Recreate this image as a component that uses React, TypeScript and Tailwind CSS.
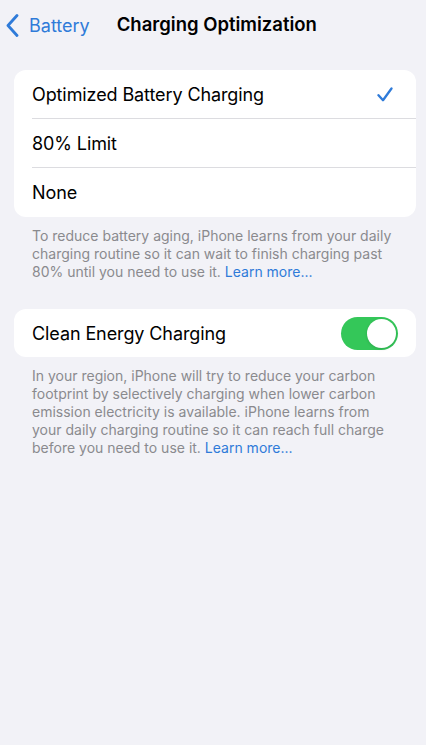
const font = { fontFamily: 'Inter, "Noto Sans", sans-serif' }

function Toggle({ on }: { on: boolean }) {
  return (
    <div
      className={`flex h-[33px] w-[57px] items-center rounded-full p-[2px] ${
        on ? 'justify-end bg-[#34c759]' : 'justify-start bg-[#e9e9ea]'
      }`}
    >
      <div className="h-[29px] w-[29px] rounded-full bg-white shadow-[0_1px_3px_rgba(0,0,0,0.15)]" />
    </div>
  )
}

function LearnMore() {
  return <span className="text-[#2f7bd9]">Learn more...</span>
}

export default function App() {
  const options = ['Optimized Battery Charging', '80% Limit', 'None']
  const selected = 0

  return (
    <div
      className="min-h-[745px] w-full bg-[#f2f2f7] text-black antialiased"
      style={font}
    >
      <header className="flex h-[50px] items-center">
        <div className="flex items-center pl-[6px] text-[#2f7bd9]">
          <svg width="13" height="23" viewBox="0 0 13 23" fill="none">
            <path
              d="M11 1.5L2 11.5L11 21.5"
              stroke="currentColor"
              strokeWidth="2.8"
              strokeLinecap="round"
              strokeLinejoin="round"
            />
          </svg>
          <span className="ml-[10px] text-[18px]">Battery</span>
        </div>
        <h1 className="ml-[27px] text-[18.5px] font-semibold">
          Charging Optimization
        </h1>
      </header>

      <div className="pl-[14px] pr-[10px] pt-[20px]">
        <div className="overflow-hidden rounded-[12px] bg-white">
          {options.map((label, i) => (
            <div key={label} className="pl-[18px]">
              <div
                className={`flex h-[49px] items-center justify-between pr-[23px] ${
                  i < options.length - 1 ? 'border-b border-[#dcdce0]' : ''
                }`}
              >
                <span className="text-[18px] tracking-[-0.1px]">{label}</span>
                {i === selected ? (
                  <svg width="16" height="15" viewBox="0 0 16 15" fill="none" className="text-[#2f7bd9]">
                    <path
                      d="M1.5 8.2L6 13.2L14.5 1.5"
                      stroke="currentColor"
                      strokeWidth="2.3"
                      strokeLinecap="round"
                      strokeLinejoin="round"
                    />
                  </svg>
                ) : null}
              </div>
            </div>
          ))}
        </div>
        <p className="pl-[18px] pt-[10px] text-[14px] leading-[18px] text-[#8a8a8e] whitespace-nowrap">
          To reduce battery aging, iPhone learns from your daily
          <br />
          charging routine so it can wait to finish charging past
          <br />
          80% until you need to use it. <LearnMore />
        </p>

        <div className="mt-[28px] flex h-[48px] items-center justify-between rounded-[12px] bg-white pl-[18px] pr-[18px]">
          <span className="text-[18px] tracking-[-0.1px]">Clean Energy Charging</span>
          <Toggle on />
        </div>
        <p className="pl-[18px] pt-[10px] text-[14px] leading-[18px] text-[#8a8a8e] whitespace-nowrap">
          In your region, iPhone will try to reduce your carbon
          <br />
          footprint by selectively charging when lower carbon
          <br />
          emission electricity is available. iPhone learns from
          <br />
          your daily charging routine so it can reach full charge
          <br />
          before you need to use it. <LearnMore />
        </p>
      </div>
    </div>
  )
}
